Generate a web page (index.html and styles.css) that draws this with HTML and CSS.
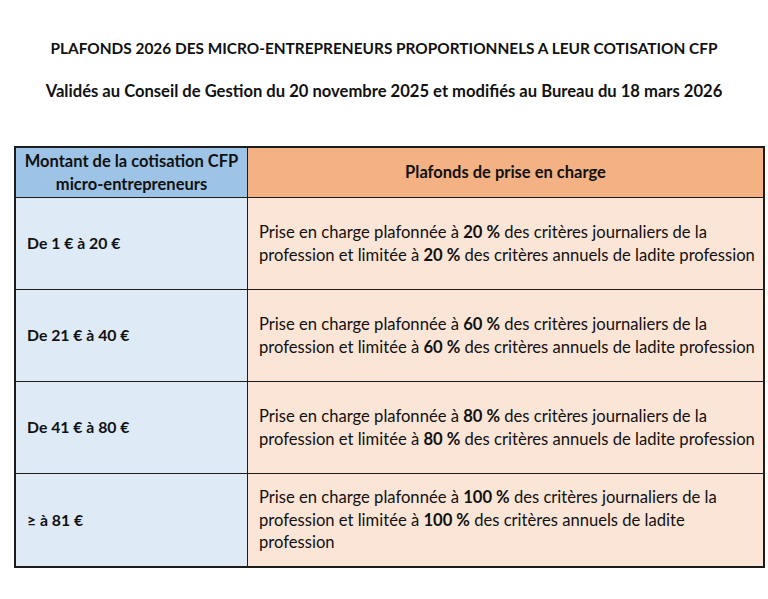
FILE: index.html
```html
<!DOCTYPE html>
<html lang="fr">
<head>
<meta charset="utf-8">
<title>Plafonds 2026</title>
<link rel="stylesheet" href="styles.css">
</head>
<body>
<div class="page">
  <h1 class="title">PLAFONDS 2026 DES MICRO-ENTREPRENEURS PROPORTIONNELS A LEUR COTISATION CFP</h1>
  <h2 class="subtitle">Validés au Conseil de Gestion du 20 novembre 2025 et modifiés au Bureau du 18 mars 2026</h2>
  <table class="grid">
    <thead>
      <tr>
        <th class="h-left">Montant de la cotisation CFP<br>micro-entrepreneurs</th>
        <th class="h-right">Plafonds de prise en charge</th>
      </tr>
    </thead>
    <tbody>
      <tr>
        <td class="c-left">De 1 € à 20 €</td>
        <td class="c-right">Prise en charge plafonnée à <b>20 %</b> des critères journaliers de la<br>profession et limitée à <b>20 %</b> des critères annuels de ladite profession</td>
      </tr>
      <tr>
        <td class="c-left">De 21 € à 40 €</td>
        <td class="c-right">Prise en charge plafonnée à <b>60 %</b> des critères journaliers de la<br>profession et limitée à <b>60 %</b> des critères annuels de ladite profession</td>
      </tr>
      <tr>
        <td class="c-left">De 41 € à 80 €</td>
        <td class="c-right">Prise en charge plafonnée à <b>80 %</b> des critères journaliers de la<br>profession et limitée à <b>80 %</b> des critères annuels de ladite profession</td>
      </tr>
      <tr class="last">
        <td class="c-left">≥ à 81 €</td>
        <td class="c-right">Prise en charge plafonnée à <b>100 %</b> des critères journaliers de la<br>profession et limitée à <b>100 %</b> des critères annuels de ladite<br>profession</td>
      </tr>
    </tbody>
  </table>
</div>
</body>
</html>
```
FILE: styles.css
```css
html, body {
  margin: 0;
  padding: 0;
  background: #ffffff;
}
body {
  font-family: Lato, "Carlito", "Liberation Sans", sans-serif;
  color: #111111;
}
.page {
  width: 768px;
  padding-top: 37px;
}
.title {
  margin: 0;
  text-align: center;
  font-size: 15.4px;
  font-weight: 700;
  line-height: 22px;
  white-space: nowrap;
}
.subtitle {
  margin: 21px 0 0 0;
  text-align: center;
  font-size: 16.6px;
  font-weight: 700;
  line-height: 22px;
  white-space: nowrap;
}
.grid {
  margin: 44px 0 0 14px;
  border-collapse: collapse;
  width: 751px;
  table-layout: fixed;
  border: 2px solid #1c1c1c;
}
.grid th, .grid td {
  border: 1px solid #1c1c1c;
  padding: 0;
  font-size: 16.5px;
  line-height: 22.5px;
  white-space: nowrap;
}
.h-left {
  width: 231px;
  height: 49px;
  background: #9dc3e6;
  font-weight: 700;
  text-align: center;
}
.h-right {
  background: #f4b183;
  font-weight: 700;
  text-align: center;
}
.grid .c-left {
  height: 91px;
  background: #deebf7;
  font-weight: 700;
  font-size: 15.8px;
  padding-left: 11px;
  vertical-align: middle;
}
.grid .c-right {
  background: #fbe5d6;
  font-size: 16.6px;
  padding-left: 11px;
  vertical-align: middle;
}
.c-right b {
  font-weight: 700;
}
.grid .last .c-left {
  height: 92px;
}
```
